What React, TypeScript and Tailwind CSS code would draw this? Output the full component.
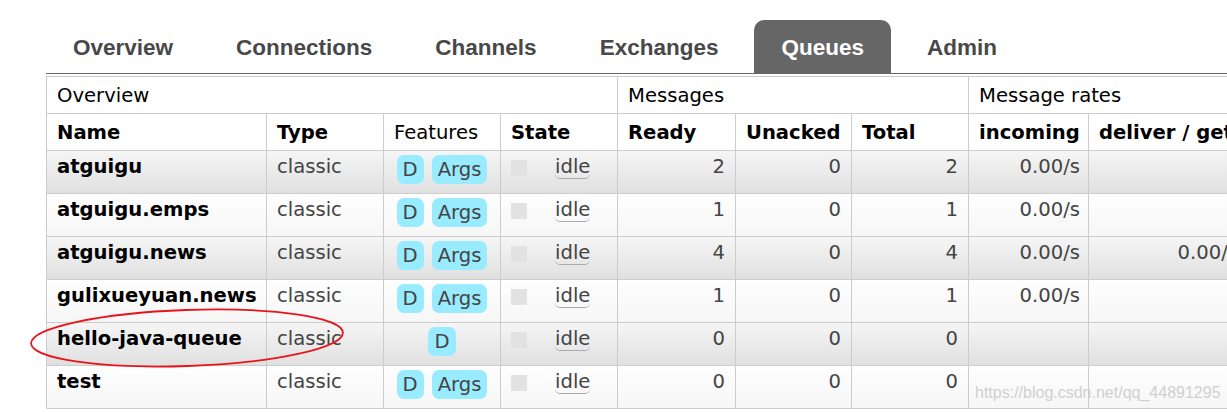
import React from 'react'

const tabs = ['Overview', 'Connections', 'Channels', 'Exchanges', 'Queues', 'Admin']

interface Queue {
  name: string
  args: boolean
  ready: number
  unacked: number
  total: number
  incoming?: string
  deliver?: string
}

const queues: Queue[] = [
  { name: 'atguigu', args: true, ready: 2, unacked: 0, total: 2, incoming: '0.00/s' },
  { name: 'atguigu.emps', args: true, ready: 1, unacked: 0, total: 1, incoming: '0.00/s' },
  { name: 'atguigu.news', args: true, ready: 4, unacked: 0, total: 4, incoming: '0.00/s', deliver: '0.00/s' },
  { name: 'gulixueyuan.news', args: true, ready: 1, unacked: 0, total: 1, incoming: '0.00/s' },
  { name: 'hello-java-queue', args: false, ready: 0, unacked: 0, total: 0 },
  { name: 'test', args: true, ready: 0, unacked: 0, total: 0 },
]

const Badge = ({ children }: { children: React.ReactNode }) => (
  <span className="inline-block h-[29px] leading-[29px] px-[6px] rounded-[7px] bg-[#99ebff] text-[#444]">
    {children}
  </span>
)

export default function App() {
  return (
    <div className="relative w-[1227px] h-[412px] overflow-hidden bg-white font-['DejaVu_Sans',sans-serif] text-[19.6px]">
      {/* Tabs */}
      <div className="ml-[46px] pt-[20px] flex gap-[9px] border-b border-[#666] font-['Liberation_Sans',Arial,sans-serif] font-bold text-[22.5px]">
        {tabs.map((t) => (
          <div
            key={t}
            className={
              'h-[53px] px-[27px] flex items-center pt-[2px] rounded-t-[10px] ' +
              (t === 'Queues' ? 'bg-[#666] text-white' : 'text-[#484848]')
            }
          >
            {t}
          </div>
        ))}
      </div>

      {/* Queues table */}
      <table className="mt-[2px] ml-[46px] table-fixed border-collapse w-[1400px]">
        <colgroup>
          <col className="w-[220px]" />
          <col className="w-[117px]" />
          <col className="w-[117px]" />
          <col className="w-[117px]" />
          <col className="w-[118px]" />
          <col className="w-[116px]" />
          <col className="w-[117px]" />
          <col className="w-[120px]" />
          <col className="w-[158px]" />
          <col className="w-[200px]" />
        </colgroup>
        <thead>
          <tr className="h-[37px]">
            <th colSpan={4} className="border border-[#ccc] text-left font-normal px-[10px] pt-[2px]">Overview</th>
            <th colSpan={3} className="border border-[#ccc] text-left font-normal px-[10px] pt-[2px]">Messages</th>
            <th colSpan={3} className="border border-[#ccc] text-left font-normal px-[10px] pt-[2px] whitespace-nowrap">Message rates</th>
          </tr>
          <tr className="h-[37px]">
            <th className="border border-[#ccc] text-left px-[10px] pt-[2px]">Name</th>
            <th className="border border-[#ccc] text-left px-[10px] pt-[2px]">Type</th>
            <th className="border border-[#ccc] text-left font-normal px-[10px] pt-[2px]">Features</th>
            <th className="border border-[#ccc] text-left px-[10px] pt-[2px]">State</th>
            <th className="border border-[#ccc] text-left px-[10px] pt-[2px]">Ready</th>
            <th className="border border-[#ccc] text-left px-[10px] pt-[2px]">Unacked</th>
            <th className="border border-[#ccc] text-left px-[10px] pt-[2px]">Total</th>
            <th className="border border-[#ccc] text-left px-[10px] pt-[2px]">incoming</th>
            <th className="border border-[#ccc] text-left px-[10px] pt-[2px] whitespace-nowrap">deliver / get</th>
            <th className="border border-[#ccc] text-left px-[10px] pt-[2px]">ack</th>
          </tr>
        </thead>
        <tbody>
          {queues.map((q, i) => (
            <tr
              key={q.name}
              className={
                'h-[43px] ' +
                (i % 2 === 0
                  ? 'bg-[linear-gradient(#f5f5f5,#e0e0e0)]'
                  : 'bg-[linear-gradient(#fefefe,#f6f6f6)]')
              }
            >
              <td className="border border-[#ccc] align-top pt-[4px] px-[10px] leading-[24px] font-bold text-black whitespace-nowrap">
                {q.name}
              </td>
              <td className="border border-[#ccc] align-top pt-[4px] px-[10px] leading-[24px] text-[#444]">classic</td>
              <td className="border border-[#ccc] align-top pt-[4px] px-[4px]">
                <div className="flex justify-center gap-[8px]">
                  <Badge>D</Badge>
                  {q.args && <Badge>Args</Badge>}
                </div>
              </td>
              <td className="border border-[#ccc] align-top pt-[4px] px-[10px] text-[#444]">
                <div className="flex items-start">
                  <span className="mt-[5px] w-[16px] h-[16px] bg-[#e2e2e2]" />
                  <span className="ml-[28px] leading-[23px] border-b border-[#aaa] rounded-b-[5px]">idle</span>
                </div>
              </td>
              <td className="border border-[#ccc] align-top pt-[4px] px-[10px] leading-[24px] text-right text-[#444]">{q.ready}</td>
              <td className="border border-[#ccc] align-top pt-[4px] px-[10px] leading-[24px] text-right text-[#444]">{q.unacked}</td>
              <td className="border border-[#ccc] align-top pt-[4px] px-[10px] leading-[24px] text-right text-[#444]">{q.total}</td>
              <td className="border border-[#ccc] align-top pt-[4px] pr-[8px] pl-[10px] leading-[24px] text-right text-[#444]">
                {q.incoming}
              </td>
              <td className="border border-[#ccc] align-top pt-[4px] pr-[8px] pl-[10px] leading-[24px] text-right text-[#444]">
                {q.deliver}
              </td>
              <td className="border border-[#ccc]" />
            </tr>
          ))}
        </tbody>
      </table>

      {/* red annotation around hello-java-queue */}
      <svg className="absolute left-0 top-0 pointer-events-none" width="1227" height="412">
        <ellipse
          cx="187"
          cy="338"
          rx="156"
          ry="28"
          fill="none"
          stroke="#e8141b"
          strokeWidth="1.8"
          transform="rotate(-2 187 338)"
        />
      </svg>

      {/* watermark */}
      <div className="absolute left-[975px] top-[381px] font-['Liberation_Sans',Arial,sans-serif] text-[16px] text-[#d0d0d0] whitespace-nowrap">
        https://blog.csdn.net/qq_44891295
      </div>
    </div>
  )
}
